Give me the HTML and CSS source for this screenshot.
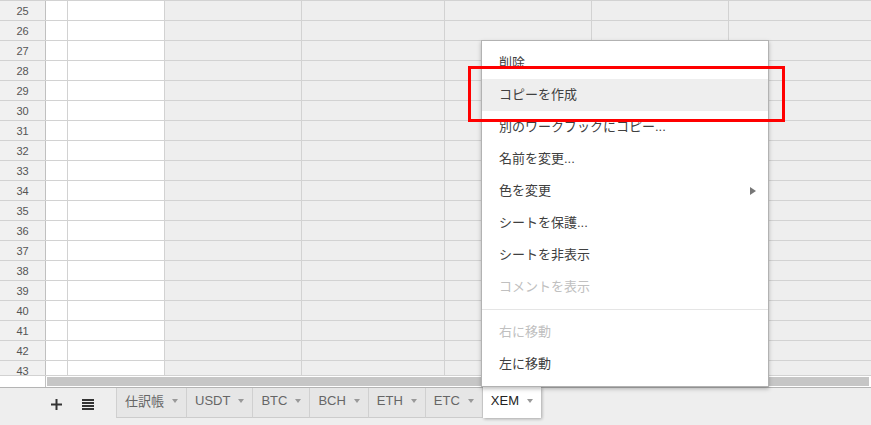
FILE: index.html
```html
<!DOCTYPE html>
<html lang="ja">
<head>
<meta charset="utf-8">
<title>Sheets</title>
<link rel="stylesheet" href="styles.css">
</head>
<body>
<div class="app">
  <div class="grid">
    <div class="row"><div class="rh">25</div><div class="c w"></div><div class="c w"></div><div class="c"></div><div class="c"></div><div class="c"></div><div class="c"></div><div class="c last"></div></div>
    <div class="row"><div class="rh">26</div><div class="c w"></div><div class="c w"></div><div class="c"></div><div class="c"></div><div class="c"></div><div class="c"></div><div class="c last"></div></div>
    <div class="row"><div class="rh">27</div><div class="c w"></div><div class="c w"></div><div class="c"></div><div class="c"></div><div class="c"></div><div class="c"></div><div class="c last"></div></div>
    <div class="row"><div class="rh">28</div><div class="c w"></div><div class="c w"></div><div class="c"></div><div class="c"></div><div class="c"></div><div class="c"></div><div class="c last"></div></div>
    <div class="row"><div class="rh">29</div><div class="c w"></div><div class="c w"></div><div class="c"></div><div class="c"></div><div class="c"></div><div class="c"></div><div class="c last"></div></div>
    <div class="row"><div class="rh">30</div><div class="c w"></div><div class="c w"></div><div class="c"></div><div class="c"></div><div class="c"></div><div class="c"></div><div class="c last"></div></div>
    <div class="row"><div class="rh">31</div><div class="c w"></div><div class="c w"></div><div class="c"></div><div class="c"></div><div class="c"></div><div class="c"></div><div class="c last"></div></div>
    <div class="row"><div class="rh">32</div><div class="c w"></div><div class="c w"></div><div class="c"></div><div class="c"></div><div class="c"></div><div class="c"></div><div class="c last"></div></div>
    <div class="row"><div class="rh">33</div><div class="c w"></div><div class="c w"></div><div class="c"></div><div class="c"></div><div class="c"></div><div class="c"></div><div class="c last"></div></div>
    <div class="row"><div class="rh">34</div><div class="c w"></div><div class="c w"></div><div class="c"></div><div class="c"></div><div class="c"></div><div class="c"></div><div class="c last"></div></div>
    <div class="row"><div class="rh">35</div><div class="c w"></div><div class="c w"></div><div class="c"></div><div class="c"></div><div class="c"></div><div class="c"></div><div class="c last"></div></div>
    <div class="row"><div class="rh">36</div><div class="c w"></div><div class="c w"></div><div class="c"></div><div class="c"></div><div class="c"></div><div class="c"></div><div class="c last"></div></div>
    <div class="row"><div class="rh">37</div><div class="c w"></div><div class="c w"></div><div class="c"></div><div class="c"></div><div class="c"></div><div class="c"></div><div class="c last"></div></div>
    <div class="row"><div class="rh">38</div><div class="c w"></div><div class="c w"></div><div class="c"></div><div class="c"></div><div class="c"></div><div class="c"></div><div class="c last"></div></div>
    <div class="row"><div class="rh">39</div><div class="c w"></div><div class="c w"></div><div class="c"></div><div class="c"></div><div class="c"></div><div class="c"></div><div class="c last"></div></div>
    <div class="row"><div class="rh">40</div><div class="c w"></div><div class="c w"></div><div class="c"></div><div class="c"></div><div class="c"></div><div class="c"></div><div class="c last"></div></div>
    <div class="row"><div class="rh">41</div><div class="c w"></div><div class="c w"></div><div class="c"></div><div class="c"></div><div class="c"></div><div class="c"></div><div class="c last"></div></div>
    <div class="row"><div class="rh">42</div><div class="c w"></div><div class="c w"></div><div class="c"></div><div class="c"></div><div class="c"></div><div class="c"></div><div class="c last"></div></div>
    <div class="row"><div class="rh">43</div><div class="c w"></div><div class="c w"></div><div class="c"></div><div class="c"></div><div class="c"></div><div class="c"></div><div class="c last"></div></div>
  </div>

  <div class="hscroll">
    <div class="corner"></div>
    <div class="track"><div class="thumb"></div></div>
  </div>

  <div class="tabbar">
    <div class="tbtn">
      <svg width="11" height="11" viewBox="0 0 11 11"><rect x="4.5" y="0" width="2" height="11" fill="#333"/><rect x="0" y="4.5" width="11" height="2" fill="#333"/></svg>
    </div>
    <div class="tbtn">
      <svg width="12" height="11" viewBox="0 0 12 11"><rect x="0" y="0" width="12" height="2" fill="#333"/><rect x="0" y="3" width="12" height="2" fill="#333"/><rect x="0" y="6" width="12" height="2" fill="#333"/><rect x="0" y="9" width="12" height="2" fill="#333"/></svg>
    </div>
    <div class="tabs">
      <div class="tab first"><span class="tname">仕訳帳</span><span class="dd"></span></div>
      <div class="tab"><span class="tname">USDT</span><span class="dd"></span></div>
      <div class="tab"><span class="tname">BTC</span><span class="dd"></span></div>
      <div class="tab"><span class="tname">BCH</span><span class="dd"></span></div>
      <div class="tab"><span class="tname">ETH</span><span class="dd"></span></div>
      <div class="tab"><span class="tname">ETC</span><span class="dd"></span></div>
      <div class="tab active"><span class="tname">XEM</span><span class="dd"></span></div>
    </div>
  </div>

  <div class="menu">
    <div class="mi">削除</div>
    <div class="mi hl">コピーを作成</div>
    <div class="mi">別のワークブックにコピー...</div>
    <div class="mi">名前を変更...</div>
    <div class="mi sub">色を変更<svg width="6" height="8" viewBox="0 0 6 8"><polygon points="0,0 6,4 0,8" fill="#777"/></svg></div>
    <div class="mi">シートを保護...</div>
    <div class="mi">シートを非表示</div>
    <div class="mi dis">コメントを表示</div>
    <div class="sep"></div>
    <div class="mi dis">右に移動</div>
    <div class="mi">左に移動</div>
  </div>

  <div class="mark"></div>
</div>
</body>
</html>
```

FILE: styles.css
```css
html, body {
  margin: 0;
  padding: 0;
}

body {
  font-family: "Liberation Sans", Arial, "Noto Sans CJK JP", sans-serif;
  background: #eeeeee;
}

.app {
  position: relative;
  width: 871px;
  height: 425px;
  overflow: hidden;
  background: #eeeeee;
  display: flex;
  flex-direction: column;
}

.grid {
  height: 375px;
  flex: none;
  overflow: hidden;
}

.row {
  display: grid;
  grid-template-columns: 46px 22px 97px 137px 143px 147px 137px 1fr;
  height: 20px;
  box-sizing: border-box;
  border-top: 1px solid #d2d2d2;
}

.rh {
  background: #f1f1f1;
  border-right: 1px solid #c0c0c0;
  font-size: 11px;
  color: #555;
  display: flex;
  align-items: center;
  justify-content: center;
}

.c {
  background: #eeeeee;
  border-right: 1px solid #d2d2d2;
}

.c.w {
  background: #ffffff;
}

.c.last {
  border-right: none;
}

.hscroll {
  flex: none;
  height: 13px;
  box-sizing: border-box;
  border-top: 1px solid #d2d2d2;
  border-bottom: 1px solid #b4b4b4;
  display: flex;
  background: #ffffff;
}

.corner {
  width: 46px;
  box-sizing: border-box;
  border-right: 1px solid #c0c0c0;
  background: #fff;
}

.track {
  flex: 1;
  padding: 1px 2px 1px 1px;
}

.thumb {
  height: 9px;
  background: #c6c6c6;
}

.tabbar {
  flex: 1;
  display: flex;
  align-items: flex-start;
  padding-left: 41px;
  background: #eeeeee;
}

.tbtn {
  width: 31px;
  height: 30px;
  display: flex;
  align-items: center;
  justify-content: center;
  padding-top: 2px;
  box-sizing: border-box;
}

.tabs {
  display: flex;
  margin-left: 13px;
}

.tab {
  height: 30px;
  box-sizing: border-box;
  display: flex;
  align-items: center;
  gap: 8px;
  padding: 0 8px 4px 8px;
  background: #e6e6e6;
  border-right: 1px solid #d0d0d0;
  border-bottom: 1px solid #cccccc;
  font-size: 13px;
  color: #666;
}

.tab.first {
  border-left: 1px solid #d0d0d0;
}

.tab.active {
  background: #ffffff;
  color: #222;
  margin-top: -1px;
  height: 31px;
  border: none;
  padding-left: 8px;
  box-shadow: 1px 1px 3px rgba(0, 0, 0, 0.3);
  position: relative;
}

.dd {
  width: 0;
  height: 0;
  border-left: 3.5px solid transparent;
  border-right: 3.5px solid transparent;
  border-top: 4px solid #999;
  margin-top: 1px;
}

.menu {
  position: absolute;
  left: 481px;
  top: 40px;
  width: 288px;
  box-sizing: border-box;
  background: #ffffff;
  border: 1px solid rgba(0, 0, 0, 0.3);
  box-shadow: 0 2px 4px rgba(0, 0, 0, 0.25);
  padding: 6px 0;
  z-index: 5;
}

.mi {
  height: 32px;
  box-sizing: border-box;
  display: flex;
  align-items: center;
  justify-content: space-between;
  padding: 0 12px 4px 17px;
  font-size: 13px;
  color: #404040;
}

.mi svg {
  margin-top: 4px;
}

.mi.hl {
  background: #eeeeee;
}

.mi.dis {
  color: #c0c0c0;
}

.sep {
  border-top: 1px solid #e5e5e5;
  margin: 6px 0;
}

.mark {
  position: absolute;
  left: 468px;
  top: 66px;
  width: 317px;
  height: 56px;
  box-sizing: border-box;
  border: 3px solid #ff0000;
  z-index: 10;
}
```
